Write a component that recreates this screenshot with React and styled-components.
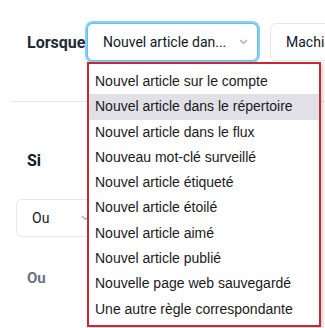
import React from 'react';
import styled, { createGlobalStyle } from 'styled-components';

const GlobalStyle = createGlobalStyle`
  html, body {
    margin: 0;
    padding: 0;
    background: #ffffff;
    overflow: hidden;
  }
  * {
    box-sizing: border-box;
  }
`;

const Page = styled.div`
  width: 325px;
  height: 328px;
  font-family: Roboto, 'Liberation Sans', sans-serif;
  color: #1f2937;
  overflow: hidden;
`;

const TriggerRow = styled.div`
  display: flex;
  align-items: center;
  padding: 23px 0 0 27px;
  width: 600px;
`;

const RowLabel = styled.div`
  width: 60px;
  flex: none;
  font-size: 16px;
  font-weight: 700;
  color: #1f2937;
`;

const SelectGroup = styled.div`
  display: flex;
  gap: 12px;
`;

const SelectWrap = styled.div`
  position: relative;
  flex: none;
`;

const SelectBox = styled.div`
  display: flex;
  align-items: center;
  justify-content: space-between;
  flex: none;
  width: ${(p) => p.$width}px;
  height: 38px;
  padding: 0 9px 0 15px;
  border: 1px solid ${(p) => (p.$focused ? '#62bff0' : '#e5e7eb')};
  border-radius: 6px;
  box-shadow: ${(p) => (p.$focused ? '0 0 0 2px #88cef5' : 'none')};
  background: #ffffff;
  font-size: 14px;
  color: #111827;
  white-space: nowrap;
`;

const Chevron = () => (
  <svg width="9" height="6" viewBox="0 0 9 6" fill="none">
    <path d="M1 1l3.5 3.5L8 1" stroke="#a3a8b1" strokeWidth="1.2" />
  </svg>
);

const Divider = styled.hr`
  margin: 40px 0 0 12px;
  border: none;
  border-top: 1px solid #e5e7eb;
`;

const SectionTitle = styled.h2`
  margin: 49px 0 0 27px;
  font-size: 16px;
  line-height: 20px;
  font-weight: 700;
  color: #111827;
`;

const ConditionRow = styled.div`
  display: flex;
  gap: 12px;
  padding: 28px 0 0 16px;
`;

const JoinLabel = styled.div`
  margin: 31px 0 0 27px;
  font-size: 15px;
  line-height: 20px;
  font-weight: 700;
  color: #6b7280;
`;

const ListBox = styled.ul`
  position: absolute;
  top: calc(100% + 1px);
  left: 0;
  width: 234px;
  margin: 0;
  padding: 5px 0 3px;
  list-style: none;
  background: #ffffff;
  border: 2px solid #c42a34;
  box-shadow: 2px 2px 3px rgba(0, 0, 0, 0.18);
  font-family: 'Liberation Sans', Arial, sans-serif;
  font-size: 14px;
  color: #1a1a1a;
  z-index: 10;
`;

const ListItem = styled.li`
  height: 25.3px;
  line-height: 25.3px;
  padding-left: 6px;
  white-space: nowrap;
  background: ${(p) => (p.$active ? '#e1e0e7' : 'transparent')};
`;

const options = [
  'Nouvel article sur le compte',
  'Nouvel article dans le répertoire',
  'Nouvel article dans le flux',
  'Nouveau mot-clé surveillé',
  'Nouvel article étiqueté',
  'Nouvel article étoilé',
  'Nouvel article aimé',
  'Nouvel article publié',
  'Nouvelle page web sauvegardé',
  'Une autre règle correspondante',
];

function App() {
  return (
    <Page>
      <GlobalStyle />
      <TriggerRow>
        <RowLabel>Lorsque</RowLabel>
        <SelectGroup>
          <SelectWrap>
            <SelectBox $width={171} $focused>
              <span>Nouvel article dan...</span>
              <Chevron />
            </SelectBox>
            <ListBox>
              {options.map((o, i) => (
                <ListItem key={o} $active={i === 1}>
                  {o}
                </ListItem>
              ))}
            </ListBox>
          </SelectWrap>
          <SelectBox $width={170}>
            <span>Machine</span>
          </SelectBox>
        </SelectGroup>
      </TriggerRow>

      <Divider />

      <SectionTitle>Si</SectionTitle>
      <ConditionRow>
        <SelectBox $width={84}>
          <span>Ou</span>
          <Chevron />
        </SelectBox>
      </ConditionRow>
      <JoinLabel>Ou</JoinLabel>
    </Page>
  );
}

export default App;
